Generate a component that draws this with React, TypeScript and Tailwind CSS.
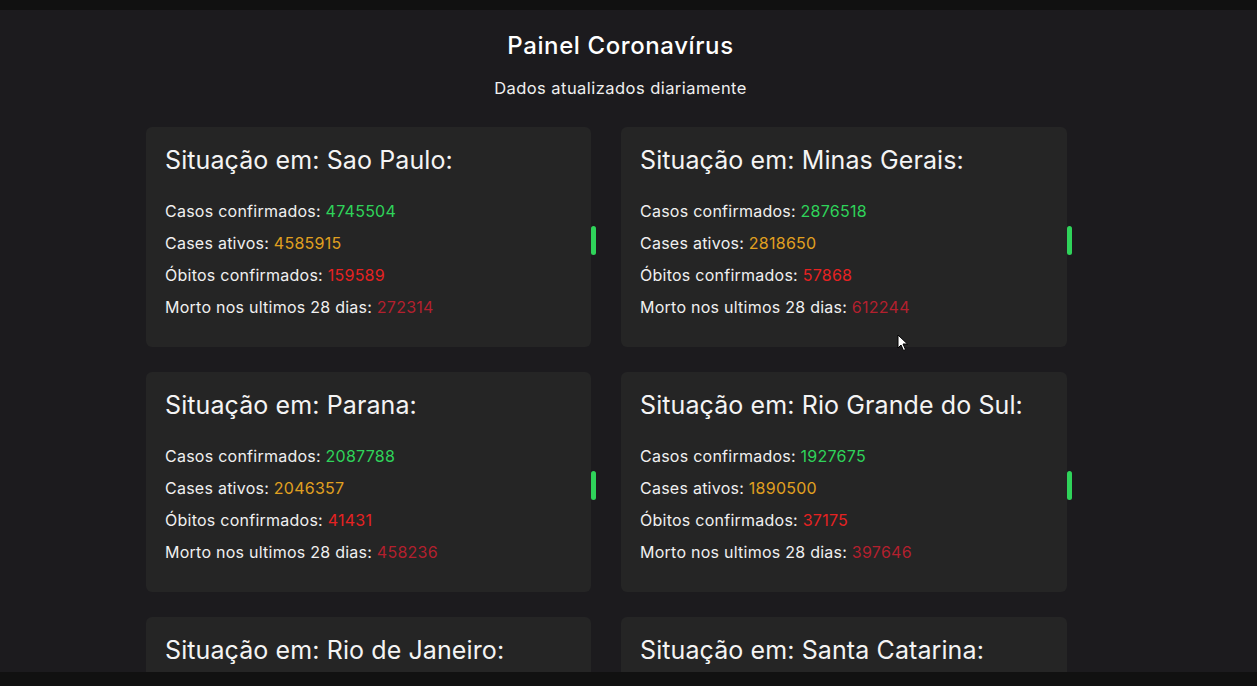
const states = [
  { name: 'Sao Paulo', confirmed: 4745504, active: 4585915, deaths: 159589, recent: 272314 },
  { name: 'Minas Gerais', confirmed: 2876518, active: 2818650, deaths: 57868, recent: 612244 },
  { name: 'Parana', confirmed: 2087788, active: 2046357, deaths: 41431, recent: 458236 },
  { name: 'Rio Grande do Sul', confirmed: 1927675, active: 1890500, deaths: 37175, recent: 397646 },
  { name: 'Rio de Janeiro', confirmed: 0, active: 0, deaths: 0, recent: 0 },
  { name: 'Santa Catarina', confirmed: 0, active: 0, deaths: 0, recent: 0 },
];

function StateCard({ s }: { s: (typeof states)[number] }) {
  return (
    <div className="relative h-[220px] rounded-md bg-[#252525] px-[19px] pt-[17px]">
      <h2 className="text-[25px] leading-[32px] tracking-[0.1px] text-[#f4f4f4]">Situação em: {s.name}:</h2>
      <div className="mt-[19px] text-[16px] leading-[32px] tracking-[0.25px] text-[#f0f0f0]">
        <p>
          Casos confirmados: <span className="text-[#2fd35a]">{s.confirmed}</span>
        </p>
        <p>
          Cases ativos: <span className="text-[#e0a020]">{s.active}</span>
        </p>
        <p>
          Óbitos confirmados: <span className="text-[#e52222]">{s.deaths}</span>
        </p>
        <p>
          Morto nos ultimos 28 dias: <span className="text-[#b3202e]">{s.recent}</span>
        </p>
      </div>
      {/* green scroll pill */}
      <span className="absolute right-[-5px] top-[99px] h-[29px] w-[5px] rounded-full bg-[#2fd35a]" />
    </div>
  );
}

export default function App() {
  return (
    <div
      className="relative flex h-[686px] flex-col overflow-hidden bg-[#111111]"
      style={{ fontFamily: 'Inter, "Noto Sans", sans-serif' }}
    >
      <div className="h-[10px] shrink-0 bg-[#111111]" />
      <main className="h-[662px] shrink-0 overflow-hidden bg-[#1c1b1e] pt-[20px]">
        <div className="pr-[16px] text-center">
          <h1 className="text-[24px] font-medium leading-[32px] tracking-[0.6px] text-white">Painel Coronavírus</h1>
          <p className="mt-[14px] text-[16.5px] leading-[24px] tracking-[0.45px] text-[#f0f0f0]">
            Dados atualizados diariamente
          </p>
        </div>
        <div className="mt-[27px] grid grid-cols-[445px_446px] justify-center gap-x-[30px] gap-y-[25px] pr-[44px]">
          {states.map((s) => (
            <StateCard key={s.name} s={s} />
          ))}
        </div>
      </main>
      <div className="flex-1 bg-[#111111]" />

      {/* mouse pointer */}
      <svg className="absolute left-[897px] top-[334px]" width="12" height="18" viewBox="0 0 12 18">
        <path d="M1 1 L1 14 L4 11 L6.5 16.5 L8.5 15.5 L6 10 L10.5 10 Z" fill="#fff" stroke="#000" strokeWidth="1" />
      </svg>
    </div>
  );
}
